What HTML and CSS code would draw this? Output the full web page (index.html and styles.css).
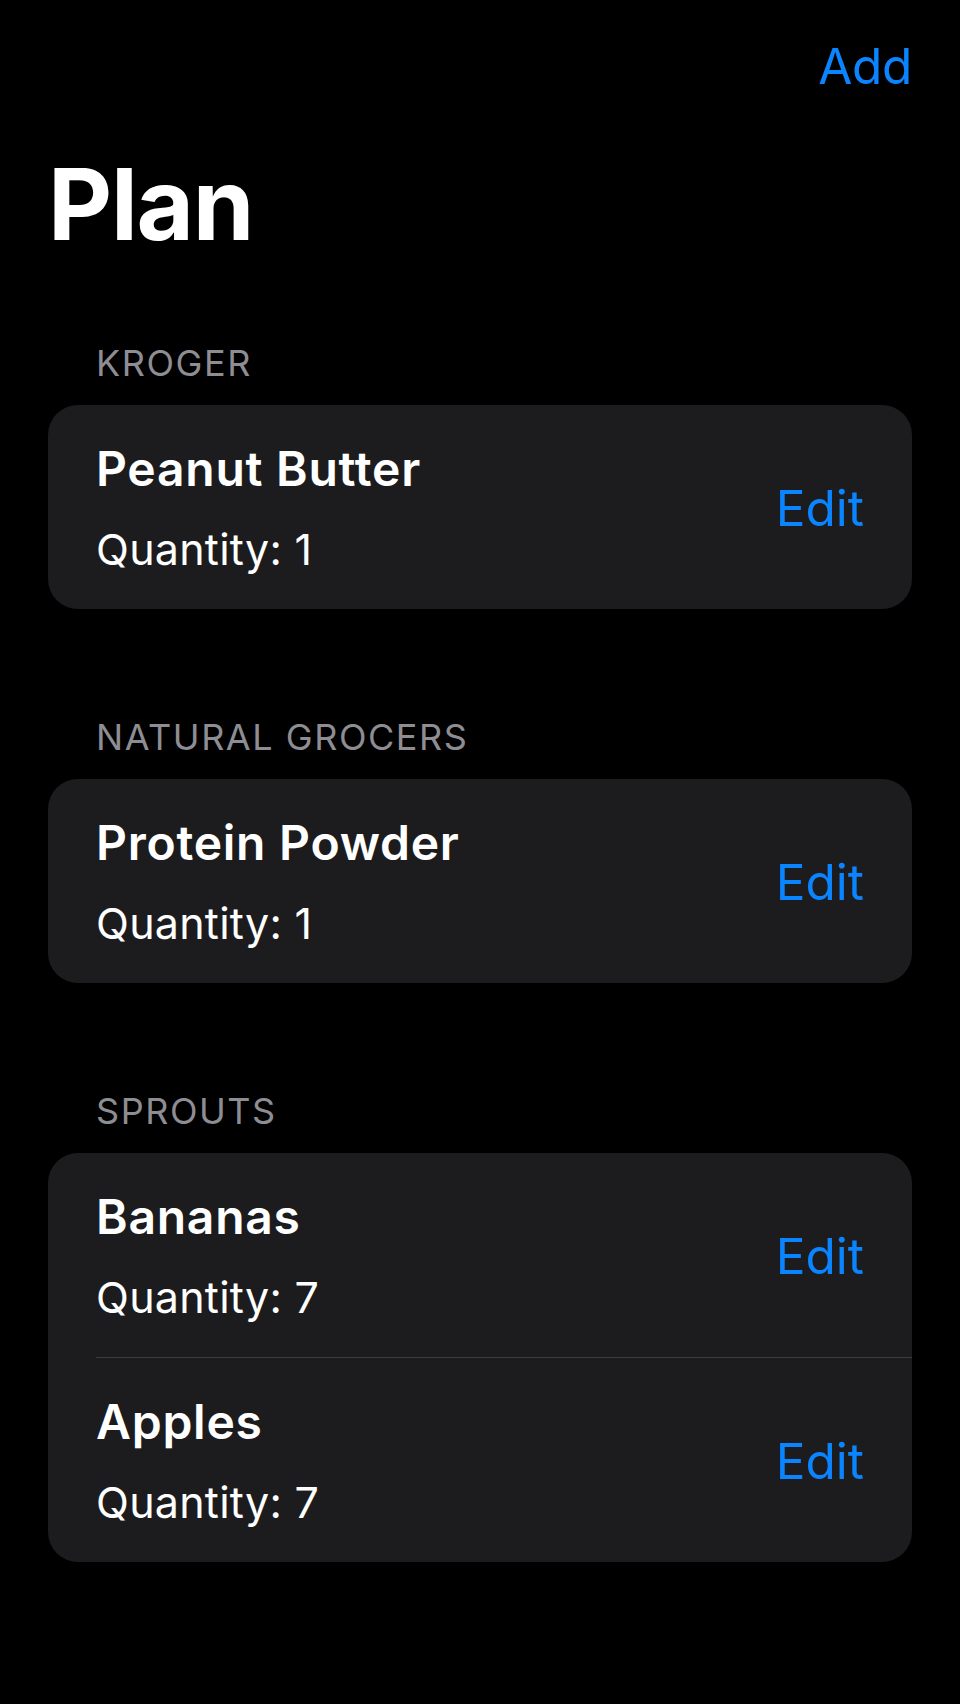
FILE: index.html
```html
<!DOCTYPE html>
<html lang="en">
<head>
<meta charset="utf-8">
<title>Plan</title>
<link rel="stylesheet" href="styles.css">
</head>
<body>
<div class="screen">
  <nav class="navbar">
    <span class="nav-btn">Add</span>
  </nav>
  <h1 class="large-title">Plan</h1>

  <section class="section">
    <div class="section-header">KROGER</div>
    <div class="card">
      <div class="row">
        <div class="row-text">
          <div class="item-name">Peanut Butter</div>
          <div class="item-qty">Quantity: 1</div>
        </div>
        <span class="edit-btn">Edit</span>
      </div>
    </div>
  </section>

  <section class="section">
    <div class="section-header">NATURAL GROCERS</div>
    <div class="card">
      <div class="row">
        <div class="row-text">
          <div class="item-name">Protein Powder</div>
          <div class="item-qty">Quantity: 1</div>
        </div>
        <span class="edit-btn">Edit</span>
      </div>
    </div>
  </section>

  <section class="section">
    <div class="section-header">SPROUTS</div>
    <div class="card">
      <div class="row">
        <div class="row-text">
          <div class="item-name">Bananas</div>
          <div class="item-qty">Quantity: 7</div>
        </div>
        <span class="edit-btn">Edit</span>
      </div>
      <div class="sep"></div>
      <div class="row">
        <div class="row-text">
          <div class="item-name">Apples</div>
          <div class="item-qty">Quantity: 7</div>
        </div>
        <span class="edit-btn">Edit</span>
      </div>
    </div>
  </section>
</div>
</body>
</html>
```

FILE: styles.css
```css
html, body {
  margin: 0;
  padding: 0;
  background: #000000;
}

body {
  font-family: Inter, "Noto Sans", "Liberation Sans", sans-serif;
  color: #ffffff;
  -webkit-font-smoothing: antialiased;
}

.screen {
  width: 960px;
  min-height: 1704px;
  box-sizing: border-box;
}

.navbar {
  display: flex;
  justify-content: flex-end;
  padding: 36px 48px 0 48px;
  height: 60px;
}

.nav-btn {
  font-size: 49.5px;
  line-height: 60px;
  color: #0a84ff;
  letter-spacing: -0.3px;
}

.large-title {
  margin: 48px 0 0 0;
  padding: 0 48px;
  font-size: 99px;
  line-height: 120px;
  font-weight: 700;
  letter-spacing: -1.2px;
}

.section {
  margin-top: 106px;
}

.section:first-of-type {
  margin-top: 77px;
}

.section-header {
  padding: 0 96px;
  font-size: 36px;
  line-height: 44px;
  color: #8d8d93;
  margin-bottom: 20px;
  letter-spacing: 1.55px;
}

.card {
  margin: 0 48px;
  background: #1c1c1e;
  border-radius: 30px;
  overflow: hidden;
}

.row {
  display: flex;
  align-items: center;
  justify-content: space-between;
  padding: 35px 48px 34px 48px;
}

.row-text {
  display: flex;
  flex-direction: column;
  gap: 25px;
}

.item-name {
  font-size: 48px;
  line-height: 58px;
  font-weight: 600;
  letter-spacing: 0.75px;
}

.item-qty {
  font-size: 43px;
  line-height: 52px;
  letter-spacing: 0.25px;
}

.edit-btn {
  font-size: 49.5px;
  line-height: 60px;
  color: #0a84ff;
  letter-spacing: 0;
}

.sep {
  height: 1px;
  margin-left: 48px;
  background: #3d3d41;
}
```
